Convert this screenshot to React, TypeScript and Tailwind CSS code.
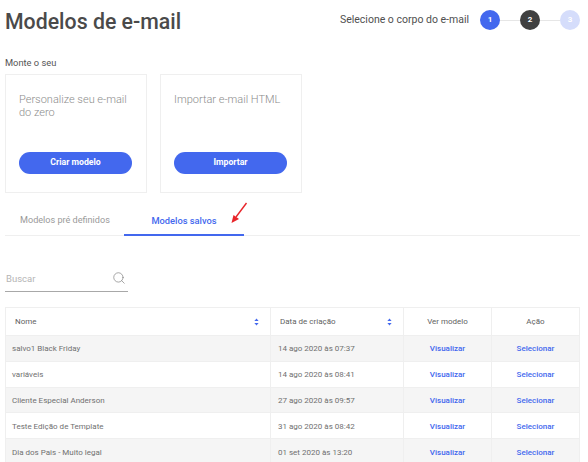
import { Search } from 'lucide-react';

const rows = [
  ['salvo1 Black Friday', '14 ago 2020 às 07:37'],
  ['variáveis', '14 ago 2020 às 08:41'],
  ['Cliente Especial Anderson', '27 ago 2020 às 09:57'],
  ['Teste Edição de Template', '31 ago 2020 às 08:42'],
  ['Dia dos Pais - Muito legal', '01 set 2020 às 13:20'],
];

function SortIcon() {
  return (
    <svg width="5" height="8" viewBox="0 0 5 8" className="fill-[#4368ee]">
      <path d="M2.5 0.5 L4.6 3 H0.4 Z" />
      <path d="M2.5 7.5 L4.6 5 H0.4 Z" />
    </svg>
  );
}

function Step({ n, className }: { n: number; className: string }) {
  return (
    <div className={`w-5 h-5 rounded-full flex items-center justify-center text-[8px] font-bold text-white ${className}`}>
      {n}
    </div>
  );
}

function Card({ text, label }: { text: string; label: string }) {
  return (
    <div className="w-[142px] h-[119px] border border-[#efefef] px-[13px] pt-[18px] flex flex-col">
      <p className="text-[11px] leading-[13px] font-light text-[#8c8c8c] h-[59px]">{text}</p>
      <button className="h-[22px] w-[113px] rounded-full bg-[#4368ee] text-white text-[8.7px] font-bold">{label}</button>
    </div>
  );
}

export default function App() {
  return (
    <div className="w-[588px] h-[462px] overflow-hidden bg-white font-['Roboto',sans-serif] pl-[5px] pr-2 pt-[5px]">
      <div className="flex items-center justify-between h-[34px]">
        <h1 className="text-[21.3px] leading-[34px] font-medium text-[#4a4a4a]">Modelos de e-mail</h1>
        <div className="flex items-center mt-[-4px]">
          <span className="text-[10.5px] text-[#4f4f4f] mr-[11px]">Selecione o corpo do e-mail</span>
          <Step n={1} className="bg-[#4368ee]" />
          <div className="w-5 h-px bg-[#e6e6e6]" />
          <Step n={2} className="bg-[#404040]" />
          <div className="w-5 h-px bg-[#e6e6e6]" />
          <Step n={3} className="bg-[#d5ddfb]" />
        </div>
      </div>

      <p className="mt-[17px] text-[9.3px] leading-[13px] text-[#555555]">Monte o seu</p>
      <div className="flex gap-[13px] mt-[5px]">
        <Card text="Personalize seu e-mail do zero" label="Criar modelo" />
        <Card text="Importar e-mail HTML" label="Importar" />
      </div>

      <div className="relative flex h-[43px] border-b border-[#efefef]">
        <div className="w-[119px] pt-[21px] pl-[15px] text-[9.1px] leading-[13px] text-[#9a9a9a]">Modelos pré definidos</div>
        <div className="w-[120px] h-[43px] pt-[21px] text-center text-[9.3px] leading-[13px] font-medium text-[#4368ee] border-b-[2px] border-[#4368ee]">
          Modelos salvos
        </div>
        <svg width="18" height="24" viewBox="0 0 18 24" className="absolute left-[225px] top-[9px]">
          <path d="M16.5 1 L6 15" stroke="#e8252a" strokeWidth="1.4" fill="none" />
          <path d="M1.5 21 L3.5 13 L9 17 Z" fill="#e8252a" />
        </svg>
      </div>

      <div className="mt-[29px] w-[123px] h-[27px] border-b border-[#a8a8a8] flex items-center justify-between pr-[2px] pt-[3px]">
        <span className="text-[9.5px] text-[#b5b5b5] pl-px">Buscar</span>
        <Search size={14} strokeWidth={1.1} className="text-[#777777] mb-[3px]" />
      </div>

      <div className="mt-[15px] w-[575px] border border-[#efefef] border-b-0 text-[8px]">
        <div className="grid grid-cols-[265px_133px_88px_1fr] h-[28px] text-[#5f5f5f] items-stretch border-b border-[#efefef]">
          <div className="flex items-center justify-between pl-[9px] pr-[11px] border-r border-[#efefef]">
            <span>Nome</span>
            <SortIcon />
          </div>
          <div className="flex items-center justify-between pl-[9px] pr-[11px] border-r border-[#efefef]">
            <span>Data de criação</span>
            <SortIcon />
          </div>
          <div className="flex items-center justify-center border-r border-[#efefef]">Ver modelo</div>
          <div className="flex items-center justify-center">Ação</div>
        </div>
        {rows.map(([name, date], i) => (
          <div
            key={name}
            className={`grid grid-cols-[265px_133px_88px_1fr] h-[25.8px] items-stretch text-[#707070] border-b border-[#efefef] ${i % 2 === 0 ? 'bg-[#f5f5f5]' : 'bg-white'}`}
          >
            <div className="flex items-center pl-[6px] pt-[2px] border-r border-[#efefef]">{name}</div>
            <div className="flex items-center pl-[7px] pt-[2px] border-r border-[#efefef]">{date}</div>
            <div className="flex items-center justify-center pt-[2px] border-r border-[#efefef] text-[#4368ee] font-medium">Visualizar</div>
            <div className="flex items-center justify-center pt-[2px] text-[#4368ee] font-medium">Selecionar</div>
          </div>
        ))}
      </div>
    </div>
  );
}
